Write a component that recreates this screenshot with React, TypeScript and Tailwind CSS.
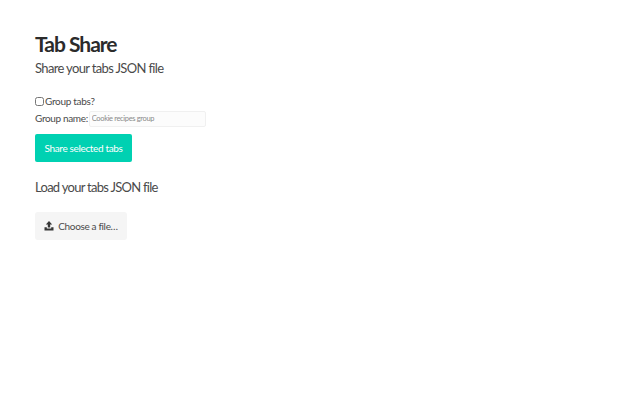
export default function App() {
  return (
    <div className="min-h-[400px] w-[640px] bg-white pl-[35px] pt-[32px] font-['Lato',sans-serif] text-[#363636]">
      <h1 className="text-[21px] font-bold leading-[24px] tracking-[-1px] text-[#2b2b2b]">Tab Share</h1>
      <h2 className="mt-[1px] text-[13px] leading-[22px] tracking-[-0.65px] text-[#4a4a4a]">Share your tabs JSON file</h2>

      <label className="mt-[14px] flex h-[16px] items-center text-[10px] tracking-[-0.3px] text-[#4a4a4a]">
        <input type="checkbox" className="m-0 h-[9px] w-[9px]" />
        <span className="ml-[1px]">Group tabs?</span>
      </label>

      <div className="mt-[1px] flex h-[17px] items-center text-[10px] tracking-[-0.35px] text-[#4a4a4a]">
        <span>Group name:</span>
        <input
          className="ml-[1px] h-[16px] w-[117px] rounded-[2px] border border-[#f0f0f0] bg-[#fcfcfc] px-[2px] text-[7.5px] text-[#777] outline-none placeholder:text-[#8a8a8a]"
          placeholder="Cookie recipes group"
        />
      </div>

      <button className="mt-[7px] block h-[28px] w-[97px] rounded-[2px] bg-[#00d1b2] text-[10px] tracking-[-0.35px] text-white">
        Share selected tabs
      </button>

      <h2 className="mt-[15px] text-[13px] leading-[20px] tracking-[-0.72px] text-[#4a4a4a]">Load your tabs JSON file</h2>

      <button className="mt-[15px] flex h-[28px] w-[92px] items-center justify-center gap-[4px] rounded-[3px] bg-[#f5f5f5] text-[10px] tracking-[-0.35px] text-[#4a4a4a]">
        <svg width="10" height="10" viewBox="0 0 10 10" fill="#363636">
          <path d="M5 0 8.2 3.5H6.2V6.6H3.8V3.5H1.8Z" />
          <path d="M0.5 6.2H2.8V7.6H7.2V6.2H9.5V9.6H0.5Z" />
        </svg>
        <span>Choose a file…</span>
      </button>
    </div>
  );
}
